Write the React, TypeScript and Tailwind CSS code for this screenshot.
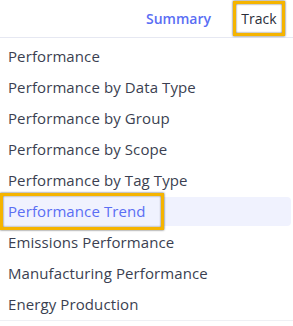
const items = [
  'Performance',
  'Performance by Data Type',
  'Performance by Group',
  'Performance by Scope',
  'Performance by Tag Type',
  'Performance Trend',
  'Emissions Performance',
  'Manufacturing Performance',
  'Energy Production',
];

export default function App() {
  return (
    <div className="w-[293px] h-[326px] bg-white overflow-hidden font-['Open_Sans',sans-serif] text-[#3b3f51]">
      {/* Tabs */}
      <div className="relative flex h-[38px] items-center justify-end border-b border-[#e6e8f2] pr-[8px]">
        <button className="mr-[22px] text-[14px] font-semibold text-[#5a6ef4]">Summary</button>
        <div className="flex h-[35px] w-[52px] items-center justify-center border-[3px] border-[#f5b400] shadow-[0_0_2px_rgba(0,0,0,0.7),inset_0_0_2px_rgba(0,0,0,0.7)] text-[14px] font-medium text-[#2b2e3a]">
          Track
        </div>
      </div>

      {/* Menu */}
      <div className="relative border-b border-[#eef0f4] pt-[3px]">
        {items.map((item) => {
          const active = item === 'Performance Trend';
          return (
            <div key={item} className="h-[31px] py-[1px] pr-[2px]">
              <div
                className={
                  active
                    ? 'flex h-full items-center rounded-[4px] bg-[#f0f2fe] pl-[8px] text-[15px] font-medium tracking-[0.1px] text-[#5a6ef4]'
                    : 'flex h-full items-center pl-[8px] text-[15px] font-medium tracking-[0.1px]'
                }
              >
                {item}
              </div>
            </div>
          );
        })}

        {/* Callout box */}
        <div className="absolute left-0 top-[155px] h-[37px] w-[164px] border-[3px] border-[#f5b400] shadow-[0_0_2px_rgba(0,0,0,0.7),inset_0_0_2px_rgba(0,0,0,0.7)]" />
      </div>
    </div>
  );
}
